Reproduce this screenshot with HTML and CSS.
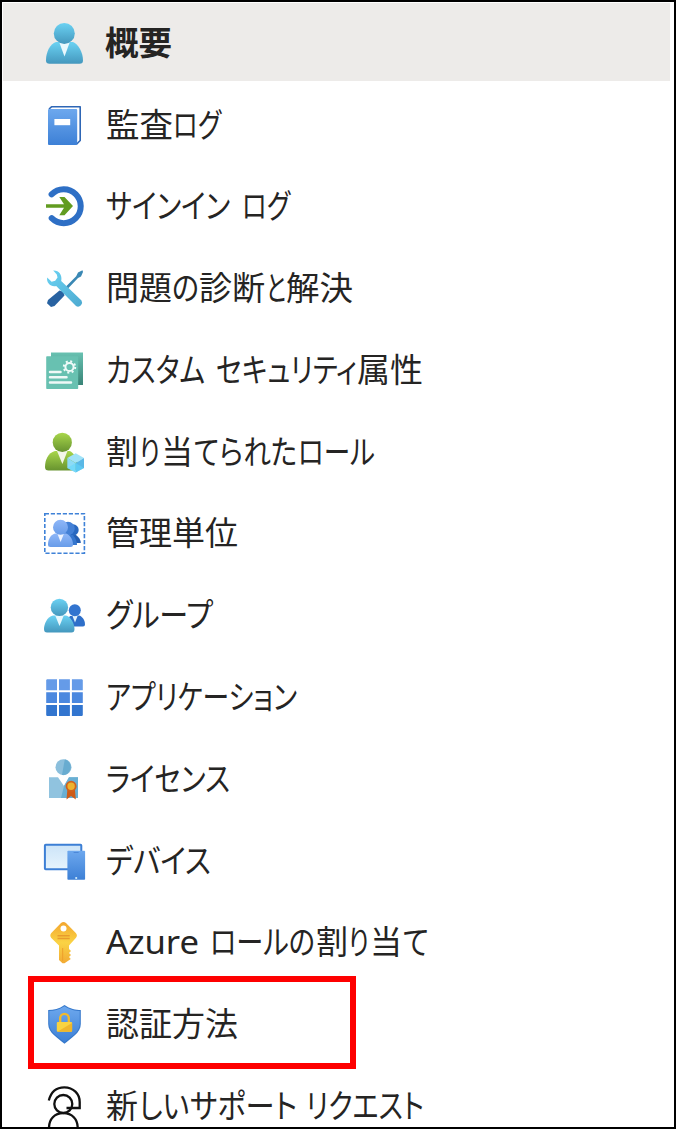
FILE: index.html
```html
<!DOCTYPE html>
<html lang="ja">
<head>
    <meta charset="UTF-8">
    <meta name="viewport" content="width=device-width, initial-scale=1.0">
    <title>概要</title>
    <link rel="stylesheet" href="styles.css">
</head>
<body>
    <svg class="defs" width="0" height="0">
        <defs>
            <linearGradient id="cyan" x1="0" y1="0" x2="0" y2="1"><stop offset="0" stop-color="#6bd2f3"/><stop offset="1" stop-color="#4497bd"/></linearGradient>
            <linearGradient id="blue" x1="0" y1="0" x2="0" y2="1"><stop offset="0" stop-color="#6da8ee"/><stop offset="1" stop-color="#3d80d6"/></linearGradient>
            <linearGradient id="green" x1="0" y1="0" x2="0" y2="1"><stop offset="0" stop-color="#a8d64b"/><stop offset="1" stop-color="#67932f"/></linearGradient>
            <linearGradient id="soft" x1="0" y1="0" x2="0" y2="1"><stop offset="0" stop-color="#8fb7f8"/><stop offset="1" stop-color="#689ce9"/></linearGradient>
            <linearGradient id="gold" x1="0" y1="0" x2="0" y2="1"><stop offset="0" stop-color="#f3a62f"/><stop offset=".5" stop-color="#fad344"/><stop offset="1" stop-color="#f2aa34"/></linearGradient>
            <linearGradient id="teal" x1="0" y1="0" x2="0" y2="1"><stop offset="0" stop-color="#68c1b1"/><stop offset="1" stop-color="#398477"/></linearGradient>
            <linearGradient id="screen" x1="0" y1="0" x2="0" y2="1"><stop offset="0" stop-color="#cce4f8"/><stop offset="1" stop-color="#e6f4fd"/></linearGradient>
            <linearGradient id="tool" gradientUnits="userSpaceOnUse" x1="6" y1="6" x2="39" y2="40"><stop offset="0" stop-color="#69d1f2"/><stop offset="1" stop-color="#4eabd1"/></linearGradient>
        </defs>
    </svg>
    <div class="panel">
        <ul class="menu">
            <li class="item active">
                <svg class="icon" viewBox="0 0 44 44">
                    <path d="M14 21C8 23 4 31 4 39.5Q4 42.8 7.5 42.8H37.5Q41 42.8 41 39.5C41 31 36 23 31 21Z" fill="url(#cyan)"/>
                    <path d="M17.3 21.5L22.5 35.5L27.7 21.5Z" fill="#e9f8fd"/>
                    <circle cx="22.3" cy="12.4" r="10.5" fill="url(#cyan)"/>
                </svg>
                <svg class="label bold"><text x="-1" y="53" textLength="67" lengthAdjust="spacingAndGlyphs">概要</text></svg>
            </li>
            <li class="item">
                <svg class="icon" viewBox="0 0 44 44">
                    <path d="M7 6L9.5 3.8H38.2V37.5L34.5 41.2" fill="#fff" stroke="#2e66b5" stroke-width="1.6" stroke-linejoin="round"/>
                    <rect x="6" y="6" width="29.2" height="36" rx="1" fill="url(#blue)"/>
                    <rect x="12.4" y="16" width="15.8" height="6.2" fill="#fff"/>
                </svg>
                <svg class="label"><text x="0" y="53" textLength="67" lengthAdjust="spacingAndGlyphs">監査</text><text x="67" y="53" textLength="48" lengthAdjust="spacingAndGlyphs">ログ</text></svg>
            </li>
            <li class="item">
                <svg class="icon" viewBox="0 0 44 44">
                    <path d="M9.6 10.3A17 17 0 1 1 9.7 34.2" fill="none" stroke="#2e6fc5" stroke-width="6" stroke-linecap="round"/>
                    <path d="M4 20.2H22L17.3 13H22.5L31 22L22.5 31.2H17.3L22 23.8H4Z" fill="#629c20"/>
                </svg>
                <svg class="label"><text x="0" y="53" textLength="124" lengthAdjust="spacingAndGlyphs">サインイン</text><text x="136" y="53" textLength="48" lengthAdjust="spacingAndGlyphs">ログ</text></svg>
            </li>
            <li class="item">
                <svg class="icon" viewBox="0 0 44 44">
                    <path d="M40.5 4.3L36 6.5L34.2 10.2L24 20.5L26 22.5L36 12L39 10.5L41 6Z" fill="#3a88b4"/>
                    <path d="M17.5 24.5Q21.8 25 22.5 29.5L12.5 40L9 41L5 37.3L6 34Z" fill="#2862a1"/>
                    <path d="M11.2 4.5C17 4.2 20.5 9 19.2 15L39.5 34.5Q41 37 39 39.3Q36.5 41.7 34 40L14.2 20C9 21.5 4 16.5 5.2 11.5L9.6 15.7L13.2 14.8L15.5 11.5L14.8 8.5Z" fill="url(#tool)"/>
                </svg>
                <svg class="label"><text x="0" y="53" textLength="66" lengthAdjust="spacingAndGlyphs">問題</text><text x="66" y="53" textLength="27" lengthAdjust="spacingAndGlyphs">の</text><text x="93" y="53" textLength="66" lengthAdjust="spacingAndGlyphs">診断</text><text x="160" y="53" textLength="20" lengthAdjust="spacingAndGlyphs">と</text><text x="180" y="53" textLength="67" lengthAdjust="spacingAndGlyphs">解決</text></svg>
            </li>
            <li class="item">
                <svg class="icon" viewBox="0 0 44 44">
                    <rect x="9" y="4.5" width="32" height="32.5" fill="url(#teal)"/>
                    <rect x="4.2" y="8.3" width="32" height="32.7" rx=".8" fill="#68c1b1"/>
                    <circle cx="27.5" cy="19" r="4.1" fill="none" stroke="#f0fbf9" stroke-width="2"/>
                    <circle cx="27.5" cy="19" r="5.7" fill="none" stroke="#f0fbf9" stroke-width="2" stroke-dasharray="2 2.48"/>
                    <path d="M8 24H18.5M8 29.3H24.5M8 34.5H29" stroke="#eef9f7" stroke-width="2.5" stroke-linecap="round"/>
                </svg>
                <svg class="label"><text x="0" y="53" textLength="99" lengthAdjust="spacingAndGlyphs">カスタム</text><text x="110" y="53" textLength="141" lengthAdjust="spacingAndGlyphs">セキュリティ</text><text x="251" y="53" textLength="66" lengthAdjust="spacingAndGlyphs">属性</text></svg>
            </li>
            <li class="item">
                <svg class="icon" viewBox="0 0 44 44">
                    <path d="M13 21C6 23 3 30 3 37Q3 40.5 6.5 40.5H33Q36 40 36 37C36 28 31 22 27.5 21Z" fill="url(#green)"/>
                    <path d="M15 21L20.4 34L25.5 21Z" fill="#f2f6e8"/>
                    <circle cx="20.3" cy="12.4" r="9.6" fill="url(#green)"/>
                    <path d="M33.7 23.2L42 28L33.7 33L25.3 28Z" fill="#a1e3f8"/>
                    <path d="M25.3 28L33.7 33V42.6L25.3 38Z" fill="#8cdbf6"/>
                    <path d="M42 28L33.7 33V42.6L42 38Z" fill="#5ab8e6"/>
                    <path d="M25.3 38L33.7 33L42 38L33.7 42.6Z" fill="#61d7fb" opacity=".55"/>
                </svg>
                <svg class="label"><text x="0" y="53" textLength="32" lengthAdjust="spacingAndGlyphs">割</text><text x="33" y="53" textLength="21" lengthAdjust="spacingAndGlyphs">り</text><text x="55" y="53" textLength="32" lengthAdjust="spacingAndGlyphs">当</text><text x="88" y="53" textLength="103" lengthAdjust="spacingAndGlyphs">てられた</text><text x="192" y="53" textLength="77" lengthAdjust="spacingAndGlyphs">ロール</text></svg>
            </li>
            <li class="item">
                <svg class="icon" viewBox="0 0 44 44">
                    <rect x="2.8" y="2.7" width="39.6" height="39.6" fill="none" stroke="#3f82d8" stroke-width="1.6" stroke-dasharray="4.2 1.8"/>
                    <path d="M26 24H34Q38.5 27 38.8 32H30Z" fill="#245eb2"/><circle cx="31" cy="19" r="5.7" fill="#2868c0"/>
                    <path d="M22 24H31Q35 29 35 34H28Z" fill="#3576ce"/><circle cx="26" cy="17.5" r="6.7" fill="#4380d6"/>
                    <path d="M13 22.5C8 24 6 29 6 33.5Q6 36 8.5 36H28.5Q31 36 31 33.5C31 28 27 23 24 22.5Z" fill="url(#soft)"/>
                    <path d="M15.5 23L18.6 31L21.8 23Z" fill="#eef4ff"/>
                    <circle cx="18.5" cy="16.3" r="7.5" fill="url(#soft)"/>
                </svg>
                <svg class="label"><text x="0" y="53" textLength="132" lengthAdjust="spacingAndGlyphs">管理単位</text></svg>
            </li>
            <li class="item">
                <svg class="icon" viewBox="0 0 44 44">
                    <path d="M28 23C25 27 25 31 26 33.5H41Q43 33.5 43 31.5C43 27 40 23 37 22.5Z" fill="#2e6fc9"/>
                    <path d="M30.5 23L33 29.5L35.6 23Z" fill="#e4f2fc"/>
                    <circle cx="32.8" cy="17.2" r="6" fill="#3274cf"/>
                    <path d="M11 22.5C5 24 2 31 2 36Q2 39.5 5 39.5H29.5Q32.5 39.5 32.5 36C32.5 30 28 23 24 22.5Z" fill="url(#cyan)"/>
                    <path d="M13.2 22.5L17.5 33L21.8 22.5Z" fill="#e9f8fd"/>
                    <circle cx="17.4" cy="14.4" r="8.7" fill="url(#cyan)"/>
                </svg>
                <svg class="label"><text x="0" y="53" textLength="107" lengthAdjust="spacingAndGlyphs">グループ</text></svg>
            </li>
            <li class="item">
                <svg class="icon" viewBox="0 0 44 44">
                    <path d="M5 4.3H15V15.3H4.2V5ZM17 4.3H27.9V15.3H17ZM29.9 4.3H40L40.8 5V15.3H29.9Z" fill="#659be8"/>
                    <path d="M4.2 17.3H15V28.1H4.2ZM17 17.3H27.9V28.1H17ZM29.9 17.3H40.8V28.1H29.9Z" fill="#4b88df"/>
                    <path d="M4.2 30.1H15V41H5L4.2 40.2ZM17 30.1H27.9V41H17ZM29.9 30.1H40.8V40.2L40 41H29.9Z" fill="#3275cf"/>
                </svg>
                <svg class="label"><text x="0" y="53" textLength="191" lengthAdjust="spacingAndGlyphs">アプリケーション</text></svg>
            </li>
            <li class="item">
                <svg class="icon" viewBox="0 0 44 44">
                    <path d="M7 20.3H16L22 29L27 20.3H36V41H7Z" fill="#90c3df"/>
                    <path d="M22 29L27 20.3H36V41H19Z" fill="#69afd3"/>
                    <circle cx="21.5" cy="10.2" r="8" fill="#8bbfdc"/>
                    <path d="M22.8 2.3A8 8 0 0 1 20 18Z" fill="#68acd0"/>
                    <path d="M25.5 31H32.8L33.8 42.5L29 39L24.5 42.5Z" fill="#cc5c19"/>
                    <circle cx="29.1" cy="29.3" r="4.6" fill="#edb32e" stroke="#cf611e" stroke-width="1.8"/>
                </svg>
                <svg class="label"><text x="0" y="53" textLength="124" lengthAdjust="spacingAndGlyphs">ライセンス</text></svg>
            </li>
            <li class="item">
                <svg class="icon" viewBox="0 0 44 44">
                    <rect x="2.9" y="5.7" width="36.4" height="24.6" rx=".8" fill="url(#screen)" stroke="#3c7fd5" stroke-width="2"/>
                    <rect x="25.4" y="11.7" width="17.7" height="29" rx=".8" fill="url(#blue)"/>
                    <rect x="31.6" y="13" width="5" height="1" fill="#4d88d8"/>
                    <circle cx="34.2" cy="39" r="1.1" fill="#d2edfb"/>
                </svg>
                <svg class="label"><text x="0" y="53" textLength="105" lengthAdjust="spacingAndGlyphs">デバイス</text></svg>
            </li>
            <li class="item">
                <svg class="icon" viewBox="0 0 44 44">
                    <path d="M19 3Q21.5 1 24 3L33.8 13Q36 15.5 33.8 18L27 25.5V29L29 31L27 33L29 35L27 37L28.8 39L22.5 43.3H20.5L17 40V25.5L9.3 18Q7.3 15.5 9.3 13Z" fill="url(#gold)"/>
                    <circle cx="21.5" cy="8.4" r="3" fill="#fff"/>
                    <path d="M15.5 15.7H27.7M15.5 18.5H27.7" stroke="#e89b2d" stroke-width="1.4"/>
                    <path d="M20.7 28V41" stroke="#ed9e2b" stroke-width="1"/>
                </svg>
                <svg class="label"><text class="latin" x="0" y="53" textLength="93" lengthAdjust="spacingAndGlyphs">Azure</text><text x="104" y="53" textLength="105" lengthAdjust="spacingAndGlyphs">ロールの</text><text x="210" y="53" textLength="32" lengthAdjust="spacingAndGlyphs">割</text><text x="242" y="53" textLength="21" lengthAdjust="spacingAndGlyphs">り</text><text x="264" y="53" textLength="32" lengthAdjust="spacingAndGlyphs">当</text><text x="297" y="53" textLength="26" lengthAdjust="spacingAndGlyphs">て</text></svg>
            </li>
            <li class="item marked">
                <svg class="icon" viewBox="0 0 44 44">
                    <path d="M22.5 3C28 6.8 34 8 38.8 8V22C38.8 31 29 36 22.5 41.8C16 36 6.2 31 6.2 22V8C12 8 17 6.8 22.5 3Z" fill="#3679cc"/>
                    <path d="M22.5 4.3C28 8 33.5 9 37.7 9V22C37.7 30 28.5 35 22.5 40.2C16.5 35 7.3 30 7.3 22V9C12 9 17 8 22.5 4.3Z" fill="url(#blue)"/>
                    <path d="M18.2 21V16.2A4.3 4.3 0 0 1 26.8 16.2V21" fill="none" stroke="#f1b92c" stroke-width="2.3"/>
                    <rect x="14.8" y="20" width="15.3" height="9.8" rx="1" fill="#f8d341"/>
                    <path d="M15.3 29.8L30.1 21V28.8Q30.1 29.8 29 29.8Z" fill="#efb62c"/>
                </svg>
                <svg class="label"><text x="0" y="53" textLength="132" lengthAdjust="spacingAndGlyphs">認証方法</text></svg>
            </li>
            <li class="item">
                <svg class="icon" viewBox="0 0 44 44">
                    <g fill="none" stroke="#111" stroke-width="2.3">
                        <path d="M6.8 16.5C9 7.5 15 3.3 22.3 3.3C31.5 3.3 37.7 10 37.7 18V24H24.5"/>
                        <circle cx="21.3" cy="20" r="9"/>
                        <path d="M7 44C7 35 12.5 29.2 21.3 29.2S35.7 35 35.7 44"/>
                    </g>
                </svg>
                <svg class="label"><text x="0" y="53" textLength="32" lengthAdjust="spacingAndGlyphs">新</text><text x="33" y="53" textLength="50" lengthAdjust="spacingAndGlyphs">しい</text><text x="84" y="53" textLength="107" lengthAdjust="spacingAndGlyphs">サポート</text><text x="200" y="53" textLength="118" lengthAdjust="spacingAndGlyphs">リクエスト</text></svg>
            </li>
        </ul>
    </div>
</body>
</html>
```
FILE: styles.css
```css
* {
    box-sizing: border-box;
}
body {
    margin: 0;
    background-color: #fff;
    font-family: "Noto Sans CJK JP", sans-serif;
}
.defs {
    position: absolute;
}
.panel {
    width: 676px;
    height: 1129px;
    border: 2px solid #000;
    overflow: hidden;
}
.menu {
    list-style: none;
    margin: 0;
    padding: 0;
}
.item {
    position: relative;
    display: flex;
    align-items: center;
    gap: 20px;
    height: 81.77px;
    padding-left: 40px;
}
/* the fill stops short of the frame on the right */
.active {
    background: linear-gradient(#edebe9, #edebe9) 1px 1px / 667px 78px no-repeat;
}
.icon {
    width: 44px;
    height: 44px;
    flex-shrink: 0;
}
.label {
    width: 400px;
    height: 82px;
    flex-shrink: 0;
    overflow: visible;
    fill: #252423;
}
.label text {
    font-size: 33px;
    font-feature-settings: "palt";
}
.bold text {
    font-weight: 700;
}
.label .latin {
    font-family: "Noto Sans", sans-serif;
}
.marked::after {
    content: "";
    box-sizing: border-box;
    position: absolute;
    left: 26px;
    top: -7px;
    width: 328px;
    height: 93px;
    border: 6px solid #fe0000;
}
```
